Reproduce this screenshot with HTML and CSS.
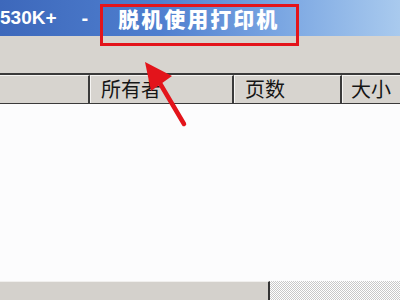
FILE: index.html
```html
<!DOCTYPE html>
<html>
<head>
<meta charset="utf-8">
<link rel="stylesheet" href="styles.css">
</head>
<body>
<div class="window">
  <div class="titlebar">
    <span class="t-model">530K+</span>
    <span class="t-dash">-</span>
    <span class="t-name">脱机使用打印机</span>
  </div>
  <div class="toolbar"></div>
  <div class="list">
    <div class="header">
      <div class="col c1"></div>
      <div class="col c2">所有者</div>
      <div class="col c3">页数</div>
      <div class="col c4">大小</div>
    </div>
    <div class="body"></div>
  </div>
  <div class="status">
    <div class="status-main"></div>
    <div class="status-grip"></div>
  </div>
</div>
<svg class="annot" width="400" height="300" viewBox="0 0 400 300">
  <rect x="101.5" y="5.5" width="196" height="39" fill="none" stroke="#e3141b" stroke-width="3"/>
  <line x1="158" y1="80" x2="184" y2="124" stroke="#e3141b" stroke-width="4.5" stroke-linecap="round"/>
  <polygon points="145,62 172,76 151,91" fill="#e3141b"/>
</svg>
</body>
</html>
```
FILE: styles.css
```css
html, body {
  margin: 0;
  padding: 0;
  width: 400px;
  height: 300px;
  overflow: hidden;
  background: #ffffff;
}
.window {
  width: 400px;
  height: 300px;
  display: flex;
  flex-direction: column;
  font-family: "Noto Sans CJK SC", "Liberation Sans", sans-serif;
}
.titlebar {
  height: 36px;
  flex: none;
  display: flex;
  align-items: center;
  background: linear-gradient(to right, #3d68bb 0%, #4f7fcf 40%, #7aa6e2 70%, #a9caee 100%);
  color: #ffffff;
  font-weight: 700;
  font-size: 20px;
  white-space: nowrap;
  overflow: hidden;
}
.t-model {
  font-family: "Liberation Sans", sans-serif;
  font-weight: 700;
  font-size: 19px;
  margin-left: 0;
}
.t-dash {
  font-family: "Liberation Sans", sans-serif;
  margin-left: 25px;
}
.t-name {
  margin-left: 30px;
  letter-spacing: 2px;
  font-size: 21px;
  font-weight: 900;
}
.toolbar {
  height: 37px;
  flex: none;
  background: #d7d4cf;
  border-bottom: 2px solid #3a3a3a;
}
.list {
  flex: 1;
  display: flex;
  flex-direction: column;
  background: #fcfcfd;
}
.header {
  height: 28px;
  flex: none;
  display: flex;
  background: #d7d4cf;
  border-bottom: 1px solid #3a3a3a;
}
.col {
  box-sizing: border-box;
  height: 100%;
  border-left: 1px solid #f6f5f3;
  border-top: 1px solid #f6f5f3;
  border-right: 2px solid #3a3a3a;
  padding-left: 10px;
  font-size: 20px;
  line-height: 26px;
  color: #161616;
  white-space: nowrap;
  overflow: hidden;
}
.c1 { width: 90px; border-left: none; }
.c2 { width: 144px; }
.c3 { width: 108px; }
.c4 { flex: 1; border-right: none; padding-left: 8px; }
.body {
  flex: 1;
}
.status {
  height: 19px;
  flex: none;
  display: flex;
}
.status-main {
  width: 268px;
  background: #d4d1cc;
  border-top: 1px solid #f0efed;
  border-right: 2px solid #333333;
}
.status-grip {
  flex: 1;
  background-color: #ffffff;
  background-image: repeating-conic-gradient(#c8c8c8 0% 25%, #ffffff 0% 50%);
  background-size: 2px 2px;
}
.annot {
  position: absolute;
  left: 0;
  top: 0;
  pointer-events: none;
}
```
